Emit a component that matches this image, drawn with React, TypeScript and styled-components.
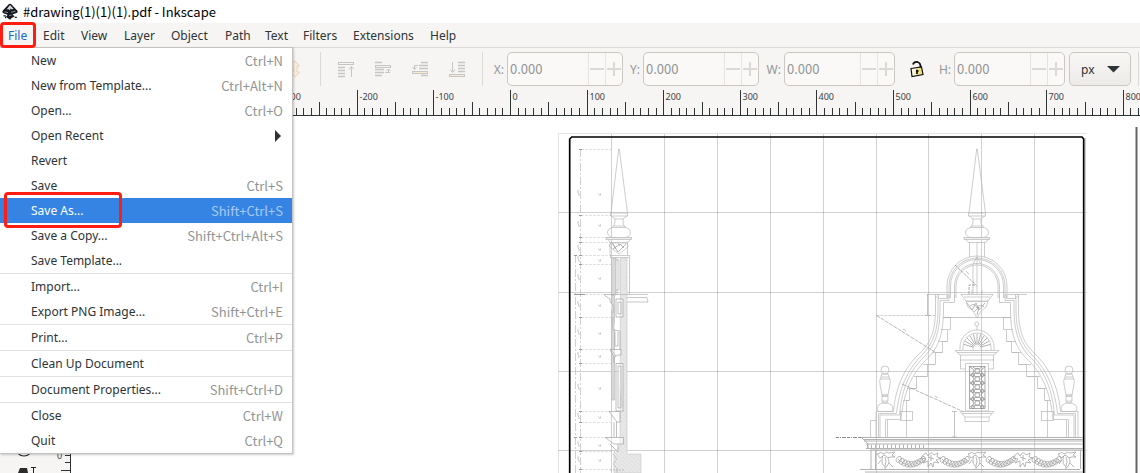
import React from 'react';
import styled, { createGlobalStyle, css } from 'styled-components';

const GlobalStyle = createGlobalStyle`
  *, *::before, *::after { box-sizing: border-box; }
  body { margin: 0; background: #fff; }
  body, button, input, select {
    font-family: "Noto Sans", "Noto Sans CJK SC", sans-serif;
    font-size: 12px;
    color: #2e3436;
  }
`;

const secondaryText = css`
  font-family: "Noto Sans CJK SC", "Noto Sans", sans-serif;
  font-size: 13px;
`;

const Shell = styled.div`
  display: flex;
  flex-direction: column;
  height: 100vh;
  overflow: hidden;
`;

const TitleBar = styled.header`
  display: flex;
  flex: none;
  align-items: center;
  gap: 5px;
  height: 23px;
  padding-left: 2px;
  background: #fff;
  color: #000;
`;

const Title = styled.h1`
  margin: 0;
  ${secondaryText}
  font-weight: 400;
  line-height: 23px;
`;

const marked = css`
  &::after {
    content: '';
    position: absolute;
    z-index: 3;
    border: 3px solid #ff1d12;
    border-radius: 4px;
    pointer-events: none;
  }
`;

const MenuBar = styled.nav`
  position: relative;
  z-index: 2;
  display: flex;
  flex: none;
  height: 25px;
  background: #f6f5f4;
  border-bottom: 1px solid #dcdad8;
`;

const MenuButton = styled.button<{ $width: number; $open?: boolean }>`
  position: relative;
  flex: none;
  width: ${(p) => p.$width}px;
  padding: 2px 0 0 8px;
  border: 0;
  background: none;
  text-align: left;
  line-height: 22px;
  white-space: nowrap;
  color: ${(p) => (p.$open ? '#1b6acb' : '#2e3436')};
  ${(p) => p.$open && marked}
  &::after { inset: -1px -1px -1px 0; }
`;

const Popup = styled.div`
  position: absolute;
  top: 24px;
  left: 0;
  width: 293px;
  background: #fff;
  border: 1px solid #c4c2c0;
  border-width: 1px 1px 1px 0;
  box-shadow: 1px 1px 2px rgba(0, 0, 0, 0.2);
`;

const Item = styled.button<{ $active?: boolean }>`
  position: relative;
  display: flex;
  align-items: center;
  justify-content: space-between;
  width: 100%;
  height: 25px;
  padding: 0 9px 0 31px;
  border: 0;
  background: ${(p) => (p.$active ? '#3584e4' : 'transparent')};
  color: ${(p) => (p.$active ? '#fff' : '#2e3436')};
  line-height: 25px;
  white-space: nowrap;
  ${(p) => p.$active && marked}
  &::after { inset: -6px 170px -5px 4px; }
`;

const Shortcut = styled.span<{ $active?: boolean }>`
  ${secondaryText}
  color: ${(p) => (p.$active ? '#a6caf3' : '#929596')};
`;

const Divider = styled.hr`
  height: 1px;
  margin: 0;
  border: 0;
  background: #e3e2e1;
`;

const Toolbar = styled.div`
  display: flex;
  flex: none;
  align-items: center;
  height: 42px;
  padding-left: 289px;
  background: #f6f5f4;
`;

const Rule = styled.span<{ $before?: number }>`
  flex: none;
  width: 1px;
  height: 34px;
  margin-left: ${(p) => p.$before ?? 0}px;
  background: #dcdad8;
`;

const IconGroup = styled.div`
  display: flex;
  flex: none;
  gap: 13px;
  padding: 0 13px;
`;

const ToolButton = styled.button`
  display: grid;
  flex: none;
  place-items: center;
  width: 24px;
  height: 24px;
  padding: 0;
  border: 0;
  background: none;
`;

const LockButton = styled(ToolButton)`
  width: 16px;
  margin-left: 14px;
`;

const Field = styled.label<{ $gap: number }>`
  display: flex;
  flex: none;
  align-items: center;
  justify-content: flex-end;
  width: ${(p) => p.$gap}px;
  padding-right: 3px;
  color: #929596;
`;

const Spin = styled.div<{ $width: number }>`
  display: flex;
  flex: none;
  width: ${(p) => p.$width}px;
  height: 34px;
  overflow: hidden;
  background: #faf9f8;
  border: 1px solid #cdc7c2;
  border-radius: 5px;
`;

const SpinInput = styled.input`
  flex: 1;
  min-width: 0;
  height: 30px;
  padding: 0 0 0 2px;
  border: 0;
  background: none;
  ${secondaryText}
  color: #929596;
`;

const SpinButton = styled.button`
  display: grid;
  flex: none;
  place-items: center;
  width: 17px;
  padding: 0;
  border: 0;
  border-left: 1px solid #e6e3e1;
  background: none;
`;

const UnitWrap = styled.div`
  position: relative;
  flex: none;
  width: 62px;
  height: 34px;
  margin: 0 7px 0 4px;
  svg { position: absolute; right: 11px; top: 13px; pointer-events: none; }
`;

const Unit = styled.select`
  width: 100%;
  height: 100%;
  padding: 0 0 0 11px;
  appearance: none;
  border: 1px solid #cdc7c2;
  border-radius: 5px;
  background: linear-gradient(#f8f7f6, #edebe9);
`;

const TopRuler = styled.div`
  flex: none;
  height: 26px;
  background: #f6f5f4;
  svg { display: block; }
`;

const Workspace = styled.main`
  display: flex;
  flex: 1;
  min-height: 0;
`;

const Toolbox = styled.aside`
  display: flex;
  flex: none;
  flex-direction: column;
  justify-content: flex-end;
  width: 56px;
  background: #f6f5f4;
`;

const SideRuler = styled.div`
  flex: none;
  width: 15px;
  background: #f6f5f4;
`;

const Canvas = styled.div`
  flex: 1;
  min-width: 0;
  background: #fff;
  svg { display: block; }
`;

const menus: [string, number][] = [
  ['File', 35], ['Edit', 38], ['View', 43], ['Layer', 47], ['Object', 54],
  ['Path', 40], ['Text', 38], ['Filters', 50], ['Extensions', 77], ['Help', 44],
];

type Entry = { label: string; keys?: string; sub?: boolean; active?: boolean };
const sections: Entry[][] = [
  [
    { label: 'New', keys: 'Ctrl+N' },
    { label: 'New from Template...', keys: 'Ctrl+Alt+N' },
    { label: 'Open...', keys: 'Ctrl+O' },
    { label: 'Open Recent', sub: true },
    { label: 'Revert' },
    { label: 'Save', keys: 'Ctrl+S' },
    { label: 'Save As...', keys: 'Shift+Ctrl+S', active: true },
    { label: 'Save a Copy...', keys: 'Shift+Ctrl+Alt+S' },
    { label: 'Save Template...' },
  ],
  [
    { label: 'Import...', keys: 'Ctrl+I' },
    { label: 'Export PNG Image...', keys: 'Shift+Ctrl+E' },
  ],
  [{ label: 'Print...', keys: 'Ctrl+P' }],
  [{ label: 'Clean Up Document' }],
  [{ label: 'Document Properties...', keys: 'Shift+Ctrl+D' }],
  [
    { label: 'Close', keys: 'Ctrl+W' },
    { label: 'Quit', keys: 'Ctrl+Q' },
  ],
];

const Logo = () => (
  <svg width="16" height="18" viewBox="0 0 16 18" aria-hidden="true">
    <path d="M8 .8Q9 .8 10 2L15.200 7.500Q16.500 9.300 14 10.200L11 11.200Q10 12 12 12.500Q13.200 13.500 11.500 14L9.500 15Q8.500 17.500 7 16L4.500 14.500Q3.500 13.500 5 12.800L5.500 11.800L2 10.600Q-.5 9.500 .8 7.500L6 2Q7 .8 8 .8Z" fill="#15171c" />
    <path d="M8 2L11.500 5.800L10 6.600L8.800 5.600L7.600 7.200L6.300 6L4.500 6.600Z" fill="#d5dae3" />
    <path d="M2.500 8.800L6 9.600M9 9.300L13.500 8.200M7.200 12.300H9.500" stroke="#7f8a9c" strokeWidth="1" />
    <path d="M1.500 12.800H3.800M12.800 14.300H14.800M3 14.500H4" stroke="#15171c" strokeWidth="1.300" />
  </svg>
);

const Spinner = ({ name, gap, width }: { name: string; gap: number; width: number }) => (
  <>
    <Field $gap={gap} htmlFor={`field-${name}`}>{name}:</Field>
    <Spin $width={width}>
      <SpinInput id={`field-${name}`} defaultValue="0.000" />
      <SpinButton aria-label={`Decrease ${name}`}>
        <svg width="14" height="14"><path d="M0 7H14" stroke="#dbd9d7" strokeWidth="2" /></svg>
      </SpinButton>
      <SpinButton aria-label={`Increase ${name}`}>
        <svg width="14" height="14"><path d="M0 7H14M7 0V14" stroke="#dbd9d7" strokeWidth="2" /></svg>
      </SpinButton>
    </Spin>
  </>
);

const raiseIcons = [
  {
    name: 'Raise to top',
    art: <><rect x=".5" y="1.500" width="15" height="2" fill="none" /><path d="M0 6.500H7M0 9.500H7M0 12.500H7M0 15.500H7" strokeWidth="1.600" /><path d="M13.500 16V6M11 8.500L13.500 5.500L16 8.500" /></>,
  },
  {
    name: 'Raise',
    art: <><path d="M0 1.500H7M0 8.500H9M0 11.500H9M0 14.500H7" strokeWidth="1.600" /><rect x=".5" y="4.500" width="15" height="2" fill="none" /><path d="M10 11.500H15M13.500 8.500V11.500M11.500 10L13.500 8L15.500 10" /></>,
  },
  {
    name: 'Lower',
    art: <><path d="M9 1.500H16M7 4.500H16M7 7.500H16M9 14.500H16" strokeWidth="1.600" /><rect x=".5" y="10.500" width="15" height="2" fill="#faecd2" /><path d="M6 4.500H2.500V8M.5 6L2.500 8.500L4.500 6" /></>,
  },
  {
    name: 'Lower to bottom',
    art: <><path d="M9 1.500H16M9 4.500H16M9 7.500H16M9 10.500H16" strokeWidth="1.600" /><rect x=".5" y="13.500" width="15" height="2" fill="#faecd2" /><path d="M3.500 1V11M1 8.500L3.500 11.500L6 8.500" /></>,
  },
];

const origin = 510;
const tickStep = 7.66;
const Ruler = () => {
  const last = Math.floor((window.innerWidth - origin) / tickStep);
  const marks = [];
  for (let i = -30; i <= last; i++) {
    const x = Math.round(origin + i * tickStep) + 0.5;
    const top = i % 10 === 0 ? 0 : i % 5 === 0 ? 12 : 18;
    marks.push(<path key={i} d={`M${x} ${top}V26`} stroke="#2e3436" />);
    if (i % 10 === 0) {
      marks.push(<text key={`t${i}`} x={x + 2} y={10} fontSize="9" fill="#3c4143">{i * 10}</text>);
    }
  }
  return (
    <svg width="100%" height="26" aria-label="Horizontal ruler">
      {marks}
      <rect x="71" y="25" width="100%" height="1" fill="#2e3436" />
    </svg>
  );
};

const gridX = [611.5, 664.5, 717.5, 770.5, 823.5, 876.5, 928.5, 981.5, 1034.5];
const gridY = [212.5, 292.5, 371.5, 450.5];
const dimY = [149.5, 215.5, 237.5, 242.5, 255.5, 264.5, 294.5, 317.5, 349.5, 363.5, 411.5, 422.5, 437.5, 451.5, 469.5];
const labelY = [194, 225, 249, 260, 278, 305, 333, 356, 388, 417, 445, 460];

const Spire = ({ x }: { x: number }) => (
  <g transform={`translate(${x} 0)`}>
    <path d="M-8 213L-.3 149L.3 149L8.500 213" />
    <path d="M-8.500 213V216H8.500V213ZM-8 216Q-6 217 -4 219V222Q-4 226 -7 227.500H7Q4 226 4 222V219Q6 217 8 216M-4.500 219H4.500M-6 226H6" />
    <path d="M-7 227.500Q-11.500 229 -11.500 232Q-11.500 236 -7 237.500H7Q11.500 236 11.500 232Q11.500 229 7 227.500" />
    <rect x="-13" y="237.500" width="25.500" height="2" fill="#eee" />
    <path d="M-11 239.500Q-10 242 -8 242.500H8Q10 242 11 239.500" />
  </g>
);

const Baluster = ({ x }: { x: number }) => (
  <g transform={`translate(${x} 0)`}>
    <circle cx="0" cy="370" r="4" />
    <path d="M-3 374H3L4 377H-4ZM-4 377Q-6 380 -5 384L-3 395H3L5 384Q6 380 4 377M-3 395H3V401H-3ZM-3 396.500H3M-3 401L-2 403H2L3 401M-3 403Q-8 405 -8 408Q-8 411 -6 411.500H6Q8 411 8 408Q8 405 3 403ZM-5 379H5" />
  </g>
);

const Slope = () => (
  <g>
    <path d="M-50 294.500H-38.500V298.500M-42 297H-38.500M-30.500 294.500H-41.500V302.500M-41.500 302.500V312C-42 334 -48 344 -57 353C-69 364 -81 382 -83.500 411.500H-101V437" />
    <path d="M-29.500 294.500V298.500H-39V312C-39.500 333 -45 344 -54 354C-67 367 -77 383 -80.500 413.500H-98.500V437" />
    <path d="M-28 294.500V300.500H-37V312C-37.500 334 -43 346 -52 356C-65 368 -75 385 -77.500 415H-97V437" />
    <path d="M-22.500 294.500V302.500H-33.500V312C-34 336 -39 347 -49 358C-62 370 -73 387 -76 419.500H-91.500V437M-89.500 437V420" />
    <path d="M-33 317.500H-26.500V329.500H-29.500V341.500H-34.500V352.500H-41.500V364.500H-49.500V376.500H-60.500V388.500H-67.500V400.500H-70.500V437.500M-30 329.500H-36M-30 341.500H-39M-35 352.500H-44M-42 364.500H-54M-50 376.500H-63M-61 388.500H-70M-68 400.500H-74" />
    <rect x="-76.500" y="411.500" width="12" height="9" />
  </g>
);

const Arch = () => (
  <g>
    {[30, 28, 26.5, 22.5, 21].map((r) => (
      <path key={r} d={`M${-r} 298V286A${r} ${r} 0 0 1 ${r} 286V298`} />
    ))}
  </g>
);

const Drop = ({ x }: { x: number }) => (
  <path
    transform={`translate(${x} 452)`}
    d="M-9 2Q-5 -1 -2 2Q0 -1 3 1L9 0L6 3L9 5L4 5Q3 7 2 5M-2 3Q3 5 3 10Q1 16 -1 15Q-5 12 -4 7Q-4 4 -2 3M-1 5Q1 9 -1 14M-9 2L-6 6L-3 4M-5 8L-8 12M3 11L7 15M-1 15V17"
  />
);

const Swag = ({ from, to }: { from: number; to: number }) => {
  const count = Math.round((to - from) / 3);
  return (
    <g>
      {Array.from({ length: count }, (_, i) => {
        const x = from + i * 3;
        const y = 457 + Math.sin(((i + 0.5) / count) * Math.PI) * 6;
        return <path key={i} d={`M${x} ${y}q2 -3 4 -1q1 3 -1 5q-3 1 -4 -1q0 -2 1 -3m1 1l2 2`} />;
      })}
    </g>
  );
};

const Blossom = ({ x }: { x: number }) => (
  <path
    transform={`translate(${x} 452)`}
    d="M-8 3L-5 1L-3 4Q0 -2 3 3L7 1L6 5L10 6L5 8L8 11L3 10L2 15L0 11L-3 15L-3 9L-8 11L-5 7L-10 6ZM-3 5L3 7M0 3V9"
  />
);

const Drawing = () => (
  <svg width="100%" height="100%" aria-label="Gable elevation drawing">
    <defs>
      <pattern id="hatch" width="3" height="3" patternUnits="userSpaceOnUse" patternTransform="rotate(-45)">
        <rect width="3" height="3" fill="#e8e8e8" />
        <path d="M0 0V3" stroke="#d8d8d8" />
      </pattern>
    </defs>
    <g transform="translate(-71 -116)" fill="none" stroke="#b8b8b8" strokeWidth=".7">
      <path d="M558.500 473V133.500H1087" stroke="#e4e4e4" strokeWidth="1" />
      <g stroke="#808080" strokeOpacity=".36" strokeWidth="1">
        {gridX.map((x) => <path key={x} d={`M${x} 134V473`} />)}
        {gridY.map((y) => <path key={y} d={`M558 ${y}H1087`} />)}
      </g>
      <path d="M569.700 480V139L571.700 137H1082L1083.700 139V480" stroke="#000" strokeWidth="1.700" />
      <path d="M1085.500 138V473" stroke="#ccc" strokeWidth="1" />

      <path d="M580.500 149V473M575.500 255V473" strokeDasharray="8 2 2 2" stroke="#bbb" />
      <g strokeDasharray="3 1" stroke="#d6d6d6">
        {dimY.map((y) => <path key={y} d={`M581 ${y}H611`} />)}
      </g>
      <g stroke="#999" strokeWidth="1">
        {dimY.map((y) => <path key={y} d={`M579 ${y}H582`} />)}
        <path d="M574 255.500H577M574 294.500H585M574 437.500H577" />
      </g>
      <g stroke="#aaa">
        {labelY.map((y) => <path key={y} d={`M598 ${y}h1m1 0h1M599 ${y + 1}h2M578 ${y - 4}v3l1 1v2`} />)}
      </g>

      <Spire x={619} />
      <path d="M610 242V255M627.500 242V255M611 243H619V246L623 243H627L628 247L619 254L609 246Z" />
      <path d="M612 243L618 252L626 244M613 249L620 244L624 248M613 244L616 249" stroke="#999" />
      <rect x="610.500" y="255.500" width="19" height="2" />
      <path d="M620.500 258H627V454H641V473H614V452L620 446Z" fill="url(#hatch)" stroke="#ccc" />
      <path d="M611.500 258H615.500V295H611.500ZM611.500 295H614.500V400H611.500Z" fill="#d8d8d8" stroke="#bbb" />
      <path d="M615.500 260H619V290H615.500M617 258V295M629.500 258V294M604 294.500H648M627 297.500H647L648 302H627" stroke="#b0b0b0" />
      <path d="M604 295L610 299V302L613 305V313M616 299H623V317H616ZM618 302H621V314H618ZM613 317V330L620 331V349M615 332V346H618V332M610 349.500H621V355H618L614 357ZM611 350L616 356M614 357V363M616 363.500H623V411M618 366H621V408H618ZM616 363V411H624M609 411.500H620V422H617L611 414ZM614 422V437M616.500 422V437M605 437.500H623.500V444H614L606 438ZM610 444L618 452V444" fill="#fff" fillOpacity=".5" stroke="#a4a4a4" />
      <path d="M613 454L617 459L613 464L617 468V473M610 470H624" stroke="#aaa" strokeDasharray="2 1" />

      <Spire x={977} />
      <path d="M969.500 242V257M984.500 242V257" />
      <g transform="translate(977 0)">
        <Arch />
        <Slope />
        <g transform="scale(-1 1)"><Slope /></g>
        <path d="M-101 420.500H-106.500V437" />
      </g>
      <path d="M977 242V294M973 294V264L977 257L981 264" />
      <path d="M955 265L976.500 285.500M969 294V285H976" stroke="#888" strokeDasharray="3 1" />
      <path d="M876.500 315.500H935" stroke="#bbb" strokeDasharray="3 1" />
      <path d="M876.500 315.500L935 352M902 384L964 412" stroke="#999" strokeDasharray="4 1" />
      <path d="M927.500 294V315M925 315.500H930M954.500 411.500V437M952 411.500H957M952 437H957M943 317.500H1011M903 329l3 2M966 271l3 3M935 396l3 2" stroke="#aaa" />
      <path d="M961 294.500H993L988 301H966ZM964 297H990M966 301.500H988L986 307L981 311L977 318L973 311L968 307ZM972 290V294M982 290V294" />
      <path d="M967 303L972 310L976 303L979 310L985 303M970 306Q975 302 977 308Q980 303 984 307M974 312L979 307L977 315" stroke="#999" />
      <circle cx="976.700" cy="324" r="2" />
      <path d="M977 326V330M960 350V347A17 17 0 0 1 994 347V350M963 350V347A14 14 0 0 1 991 347V350M973 350V347Q977 342 981 347V350" />
      <g stroke="#999">
        {[-75, -60, -45, -30, -15, 0, 15, 30, 45, 60, 75].map((a) => (
          <path key={a} d="M977 344V334" transform={`rotate(${a} 977 348)`} />
        ))}
      </g>
      <path d="M955 350.500H999L994 355H960ZM960.500 355V369H965M993.500 355V369H989M957 352.500H997M960 360H994M965.500 363.500H988.500V411H965.500ZM960 411.500H994L989 417V421.500H965V417ZM962 413.500H992M965 417H989" />
      <rect x="969.500" y="366.500" width="15.500" height="42" stroke="#888" />
      <g stroke="#858585">
        {[367, 375, 383, 391, 399].map((y) => (
          <g key={y}>
            <path d={`M970 ${y}Q978 ${y + 4} 970 ${y + 8}M985 ${y}Q977 ${y + 4} 985 ${y + 8}M973 ${y}Q977 ${y + 4} 982 ${y}M973 ${y + 8}Q977 ${y + 4} 982 ${y + 8}`} />
            <circle cx="977.300" cy={y + 4} r="2.500" />
            <circle cx="973" cy={y + 8} r="1.500" />
            <circle cx="982" cy={y + 8} r="1.500" />
          </g>
        ))}
      </g>
      <Baluster x={885} />
      <Baluster x={1069} />

      <path d="M836 437.500H862" stroke="#888" strokeDasharray="3 1 1 1 4 1" strokeWidth="1" />
      <path d="M861 437.500H1083M863 439.500H1083M864 441H1083M866 444H1083M866 448.500H1083M870 450H1083M861 437L868 444V448M871 450V469M875.500 450V469M860 469.500H1080M865 472H1083M1080.500 450V469" stroke="#b2b2b2" strokeWidth="1" />
      <path d="M867 446.500H926" stroke="#b5b5b5" strokeWidth="4" strokeDasharray="1 3" />
      <g stroke="#999">
        <Drop x={886} />
        <Swag from={897} to={923} />
        <Blossom x={931} />
        <Swag from={941} to={967} />
        <Drop x={977} />
        <Swag from={987} to={1013} />
        <Blossom x={1023} />
        <Swag from={1033} to={1059} />
        <Drop x={1067} />
      </g>
      <path d="M1136.500 127V480" stroke="#666" strokeWidth="2" />
    </g>
  </svg>
);

export default function App() {
  return (
    <Shell>
      <GlobalStyle />
      <TitleBar>
        <Logo />
        <Title>#drawing(1)(1)(1).pdf - Inkscape</Title>
      </TitleBar>
      <MenuBar>
        {menus.map(([label, width], i) => (
          <MenuButton key={label} $width={width} $open={i === 0}>{label}</MenuButton>
        ))}
        <Popup>
          {sections.map((entries, s) => (
            <React.Fragment key={s}>
              {s > 0 && <Divider />}
              {entries.map((e) => (
                <Item key={e.label} $active={e.active}>
                  {e.label}
                  {e.keys && <Shortcut $active={e.active}>{e.keys}</Shortcut>}
                  {e.sub && (
                    <svg width="9" height="12" aria-hidden="true"><path d="M1 0L7 6L1 12Z" fill="#2e3436" /></svg>
                  )}
                </Item>
              ))}
            </React.Fragment>
          ))}
        </Popup>
      </MenuBar>
      <Toolbar>
        <svg width="12" height="18" aria-hidden="true">
          <path d="M6 1L10.500 6H8V12H10.500L6 17L1.500 12H4V6H1.500Z" fill="#fbeee0" stroke="#f0cfae" />
        </svg>
        <Rule $before={19} />
        <IconGroup>
          {raiseIcons.map((icon) => (
            <ToolButton key={icon.name} aria-label={icon.name}>
              <svg width="16" height="17" fill="none" stroke="#c6c5c3">{icon.art}</svg>
            </ToolButton>
          ))}
        </IconGroup>
        <Rule />
        <Spinner name="X" gap={24} width={116} />
        <Spinner name="Y" gap={20} width={116} />
        <Spinner name="W" gap={25} width={111} />
        <LockButton aria-label="Lock width and height">
          <svg width="16" height="18" viewBox="0 0 16 18">
            <defs>
              <linearGradient id="brass"><stop offset="0" stopColor="#fff" /><stop offset="1" stopColor="#f0d84c" /></linearGradient>
            </defs>
            <path d="M4 4.500Q5 1.500 8.500 2Q12 3 11.500 8" fill="none" stroke="#111" strokeWidth="1.800" />
            <path d="M2 8.500L12.500 7L14 14.500L3 16.500Z" fill="url(#brass)" stroke="#111" strokeWidth="1.200" />
            <path d="M8 9.800V14M7 11H9.500" stroke="#111" strokeWidth="1.800" />
          </svg>
        </LockButton>
        <Spinner name="H" gap={29} width={111} />
        <UnitWrap>
          <Unit aria-label="Unit" defaultValue="px"><option>px</option></Unit>
          <svg width="13" height="8" aria-hidden="true"><path d="M0 1H13L6.500 7.500Z" fill="#2e3436" /></svg>
        </UnitWrap>
        <Rule />
      </Toolbar>
      <TopRuler><Ruler /></TopRuler>
      <Workspace>
        <Toolbox>
          <svg width="56" height="24" aria-hidden="true">
            <circle cx="24" cy="-1" r="8" fill="#fff" stroke="#222" strokeWidth="1.200" />
            <path d="M18 24L20 19H27L28 24Z" fill="#2b2b2b" />
            <path d="M31 18.500H36M33.500 18V24" stroke="#222" />
          </svg>
        </Toolbox>
        <SideRuler>
          <svg width="15" height="100%" aria-label="Vertical ruler">
            <path d="M14.500 0V2000M9 339.500H15M9 346.500H15M5 354.500H15" stroke="#2e3436" />
            <text x="1" y="343" fontSize="9" fill="#3c4143">0</text>
          </svg>
        </SideRuler>
        <Canvas><Drawing /></Canvas>
      </Workspace>
    </Shell>
  );
}
